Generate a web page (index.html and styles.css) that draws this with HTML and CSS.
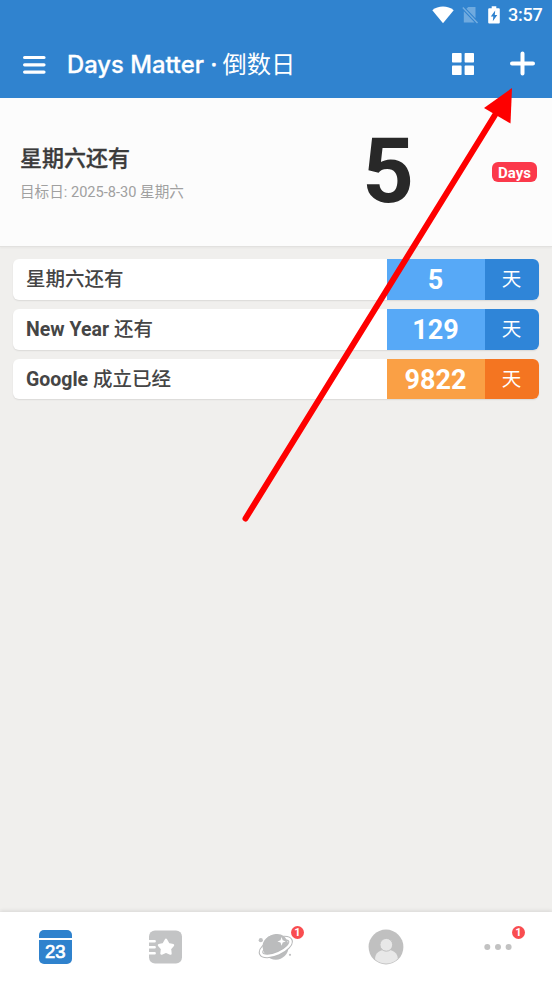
FILE: index.html
```html
<!DOCTYPE html>
<html lang="zh-CN">
<head>
<meta charset="utf-8">
<title>Days Matter · 倒数日</title>
<link rel="stylesheet" href="styles.css">
</head>
<body>
<div class="app">
  <header class="header">
    <div class="status">
      <svg class="wifi" width="22" height="18" viewBox="0 0 22 18"><path d="M0.3 4.2C6-.8 16-.8 21.7 4.2L11 17.2Z" fill="#fff"/></svg>
      <svg class="sim" width="18" height="18" viewBox="0 0 18 18"><path d="M6.2 1H13.5V12.3L4.4 2.8ZM1.8 5.3L12.6 16.5H1.8Z" fill="#6faadf"/><path d="M.8 1.5L15.5 17" stroke="#75aee0" stroke-width="1.4"/></svg>
      <svg class="battery" width="12" height="18" viewBox="0 0 12 18"><path d="M3.7.3H8.3V2.2H10.8Q11.8 2.2 11.8 3.2V16.6Q11.8 17.6 10.8 17.6H1.2Q.2 17.6 .2 16.6V3.2Q.2 2.2 1.2 2.2H3.7Z" fill="#fff"/><path d="M7.2 4.4L2.8 10.6H5.3L4.8 15.2L9.3 9H6.8Z" fill="#2f82ce"/></svg>
      <span class="clock">3:57</span>
    </div>
    <div class="toolbar">
      <svg class="menu" width="24" height="20" viewBox="0 0 24 20"><path d="M2.6 2.5H22M2.6 9.8H22M2.6 17.1H22" stroke="#fff" stroke-width="3.2" stroke-linecap="round"/></svg>
      <h1 class="title"><span class="title-en">Days Matter ·</span><span class="title-cn">倒数日</span></h1>
      <svg class="grid" width="22" height="22" viewBox="0 0 22 22" fill="#fff"><rect width="9.6" height="9.6" rx=".8"/><rect x="12.6" width="9.4" height="9.6" rx=".8"/><rect y="12.6" width="9.6" height="9.4" rx=".8"/><rect x="12.6" y="12.6" width="9.4" height="9.4" rx=".8"/></svg>
      <svg class="plus" width="26" height="26" viewBox="0 0 26 26"><path d="M13.5 2.5V22.5M3 12.6H24" stroke="#fff" stroke-width="4" stroke-linecap="round"/></svg>
    </div>
  </header>

  <section class="hero">
    <div class="hero-text">
      <h2 class="hero-title">星期六还有</h2>
      <p class="hero-date">目标日: 2025-8-30 星期六</p>
    </div>
    <div class="hero-count">5</div>
    <span class="days">Days</span>
  </section>

  <main class="list">
    <div class="row"><span class="name">星期六还有</span><span class="count">5</span><span class="unit">天</span></div>
    <div class="row"><span class="name"><b>New Year</b> 还有</span><span class="count">129</span><span class="unit">天</span></div>
    <div class="row past"><span class="name"><b>Google</b> 成立已经</span><span class="count">9822</span><span class="unit">天</span></div>
  </main>

  <nav class="tabs">
    <div class="tab">
      <div class="calendar"><div class="calendar-top"></div><div class="calendar-day">23</div></div>
    </div>
    <div class="tab">
      <svg width="34" height="34" viewBox="0 0 34 34"><rect x="0" y=".5" width="33" height="33" rx="6" fill="#c3c4c5"/><path d="M-1 11.2H5.7M-1 17.2H5.7M-1 23.2H5.7" stroke="#fff" stroke-width="2.4" stroke-linecap="round"/><path d="M17 9.8L19.4 14.1L24 15.2L21 18.8L21.5 23.6L17 21.7L12.5 23.6L13 18.8L10 15.2L14.6 14.1Z" fill="#fff" stroke="#fff" stroke-width="2.4" stroke-linejoin="round"/></svg>
    </div>
    <div class="tab">
      <div class="icon">
        <svg width="36" height="30" viewBox="0 0 36 30"><circle cx="17.8" cy="15.2" r="12.6" fill="#bbbcbd"/><g transform="rotate(-24 17.8 15)"><ellipse cx="17.8" cy="15" rx="15.9" ry="6.7" fill="none" stroke="#b8b9ba" stroke-width="4.6"/><ellipse cx="17.8" cy="15" rx="15.9" ry="6.7" fill="none" stroke="#fff" stroke-width="2.5"/><path d="M5.3 17C3.5 7 10 2.5 17.8 2.5S32.1 7 30.3 17C25 20 10.5 20 5.3 17Z" fill="#bbbcbd"/></g><path d="M23.6 5L24.7 8.3L27.8 9.4L24.7 10.5L23.6 13.8L22.5 10.5L19.4 9.4L22.5 8.3Z" fill="#fff"/><circle cx="2.8" cy="8.2" r="2.1" fill="#bfc0c1"/><circle cx="32" cy="22.8" r="1.1" fill="#bfc0c1"/></svg>
        <span class="badge planet-badge">1</span>
      </div>
    </div>
    <div class="tab">
      <svg width="36" height="36" viewBox="0 0 36 36"><circle cx="18" cy="18" r="17.4" fill="#c0c0c0"/><path d="M7 30.2C7.2 23.5 12 20.8 18.4 20.8S29.6 23.5 29.8 29.8A16.5 16.5 0 0 1 7 30.2Z" fill="#e8e8e8"/><circle cx="18.3" cy="15.8" r="6.4" fill="#e8e8e8" stroke="#c0c0c0" stroke-width="1"/></svg>
    </div>
    <div class="tab">
      <div class="icon more">
        <svg width="28" height="8" viewBox="0 0 28 8" fill="#c2c2c2"><circle cx="3.3" cy="4" r="3"/><circle cx="14" cy="4" r="3"/><circle cx="24.6" cy="4" r="3"/></svg>
        <span class="badge more-badge">1</span>
      </div>
    </div>
  </nav>

  <svg class="arrow" width="552" height="983" viewBox="0 0 552 983"><path d="M245.5 518.5L495 115" stroke="#fe0000" stroke-width="6" stroke-linecap="round"/><path d="M512 88L510.5 123.5L484 108Z" fill="#fe0000"/></svg>
</div>
</body>
</html>
```
FILE: styles.css
```css
* { box-sizing: border-box; }
body, h1, h2, p { margin: 0; }
body { font-family: Roboto, "Noto Sans CJK SC", sans-serif; background: #f0efed; }
svg { display: block; flex: none; }
.app { position: relative; width: 552px; height: 983px; display: flex; flex-direction: column; overflow: hidden; }

.header { height: 98px; background: #3083cf; color: #fff; flex: none; }
.status { height: 30px; display: flex; align-items: center; justify-content: flex-end; padding-right: 10px; }
.wifi { margin-right: 8px; }
.sim { margin-right: 8px; }
.battery { margin-right: 8px; }
.clock { font-size: 18px; line-height: 32px; font-weight: 500; width: 34px; letter-spacing: -.2px; white-space: nowrap; }
.toolbar { height: 68px; display: flex; align-items: center; padding: 0 17px 0 22px; }
.menu { margin-top: 1px; }
.title { display: flex; align-items: center; gap: 5px; margin-left: 21px; flex: 1; line-height: 34px; }
.title-en { font: 500 23.8px/35px Inter, sans-serif; -webkit-text-stroke: .3px #fff; }
.title-cn { font-size: 24.3px; line-height: 36px; font-weight: 400; padding-top: 2px; }
.grid { margin-right: 35px; }

.hero { height: 149px; flex: none; background: #fcfcfc; border-bottom: 1px solid #e2e1df; display: flex; align-items: center; padding: 0 15px 0 20px; box-shadow: 0 1px 2px #0000000a; }
.hero-text { width: 332px; padding-top: 2px; }
.hero-title { font-size: 22px; line-height: 32px; font-weight: 500; color: #3b3b3b; -webkit-text-stroke: .3px #3b3b3b; }
.hero-date { font-size: 14.6px; line-height: 22px; margin-top: 6px; color: #a0a0a0; }
.hero-count { width: 72px; text-align: center; font-size: 90px; line-height: 100px; font-weight: 700; color: #282828; }
.days { margin-left: auto; width: 45px; height: 20px; border-radius: 6px; background: #fb394b; color: #fff; font-size: 15px; line-height: 22px; font-weight: 700; text-align: center; }

.list { flex: 1; display: flex; flex-direction: column; gap: 9px; padding: 12.4px 13.5px 0 13px; }
.row { height: 40.7px; display: flex; border-radius: 6px; overflow: hidden; background: #fff; box-shadow: 0 1px 1.5px #00000018; line-height: 42px; flex: none; }
.name { flex: 1; padding-left: 13px; font-size: 19.5px; font-weight: 500; color: #454545; }
.name b { font-weight: 700; }
.count { width: 98px; background: #57a9f7; color: #fff; text-align: center; font-size: 27px; line-height: 42px; font-weight: 700; }
.unit { width: 54px; background: #2f85d8; color: #fff; text-align: center; font-size: 19.5px; }
.past .count { background: #faa045; }
.past .unit { background: #f47521; }

.tabs { height: 71px; flex: none; background: #fff; display: grid; grid-template-columns: repeat(5, 1fr); place-items: center; padding-bottom: 2px; box-shadow: 0 -1px 4px #0000001c; }
.calendar { width: 33px; height: 34px; border-radius: 5px; overflow: hidden; display: flex; flex-direction: column; gap: 2px; }
.calendar-top { height: 8px; background: #2f82cd; }
.calendar-day { flex: 1; background: #2f82cd; color: #fff; text-align: center; font: 400 18.5px/23px "Liberation Sans", sans-serif; -webkit-text-stroke: .7px #fff; }
.icon { position: relative; }
.more { left: 1px; }
.badge { position: absolute; width: 13px; height: 13px; border-radius: 50%; background: #f94d50; color: #fff; font-size: 11px; line-height: 13px; text-align: center; font-weight: 700; }
.planet-badge { left: 33px; top: -6px; }
.more-badge { left: 28px; top: -17px; }
.arrow { position: absolute; inset: 0; pointer-events: none; }
```
